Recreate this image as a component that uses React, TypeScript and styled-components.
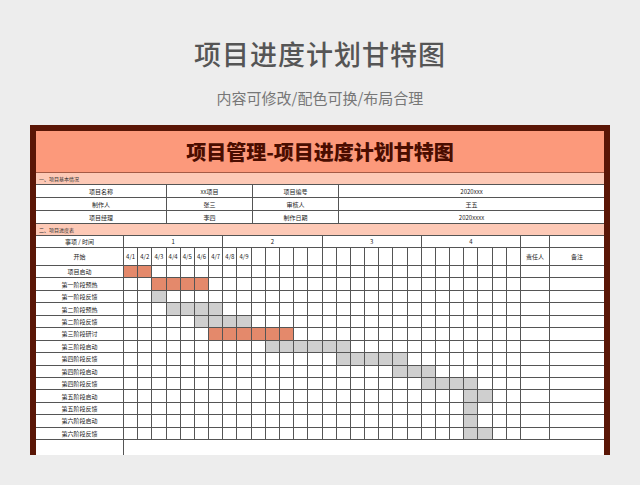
import React from "react";
import styled, { createGlobalStyle } from "styled-components";

const G = createGlobalStyle`
  html,body{margin:0;padding:0;background:#ededed;overflow:hidden;}
  body{font-family:"Noto Sans CJK SC","Noto Sans",sans-serif;}
`;
const Page = styled.div`width:640px;height:455px;overflow:hidden;display:flex;flex-direction:column;align-items:center;background:#ededed;`;
const Title = styled.h1`margin:36px 0 0;font-size:27px;font-weight:500;color:#555;line-height:36px;letter-spacing:1px;`;
const Sub = styled.div`margin-top:15px;font-size:15px;color:#777;line-height:22px;`;
const Frame = styled.div`margin-top:16px;width:568px;border:6px solid #5a1606;border-bottom:none;background:#fff;flex:1;`;
const Head = styled.div`height:41px;background:#fc997b;display:flex;align-items:center;justify-content:center;font-size:20px;font-weight:900;color:#4a0d00;border-bottom:1px solid #a45a45;`;
const Section = styled.div`height:11px;background:#fdc9b6;font-size:5px;color:#333;display:flex;align-items:center;padding-left:3px;border-bottom:1px solid #555;`;
const Info = styled.div`display:grid;grid-template-columns:130px 85px 85px 1fr;gap:1px;background:#555;border-bottom:1px solid #555;`;
const ICell = styled.div`background:#fff;height:12px;font-size:6px;color:#222;display:flex;align-items:center;justify-content:center;`;
const Gantt = styled.div`display:grid;grid-template-columns:87px repeat(28,1fr) 28px 54px;grid-template-rows:11px 17px repeat(14,11.45px) 40px;gap:1px;background:#555;`;
const Cell = styled.div<{ $fill?: string }>`background:${p => p.$fill || "#fff"};font-size:6px;color:#222;display:flex;align-items:center;justify-content:center;white-space:nowrap;overflow:hidden;`;

const tasks: [string, number, number, string][] = [
  ["项目启动", 0, 2, "s"], ["第一阶段预热", 2, 6, "s"], ["第一阶段反馈", 2, 3, "g"],
  ["第二阶段预热", 3, 7, "g"], ["第二阶段反馈", 5, 9, "g"], ["第三阶段研讨", 6, 12, "s"],
  ["第三阶段启动", 10, 16, "g"], ["第四阶段反馈", 15, 20, "g"], ["第四阶段启动", 19, 22, "g"],
  ["第四阶段反馈", 21, 25, "g"], ["第五阶段启动", 24, 26, "g"], ["第五阶段反馈", 24, 25, "g"],
  ["第六阶段启动", 24, 25, "g"], ["第六阶段反馈", 24, 26, "g"],
];
const days = ["4/1","4/2","4/3","4/4","4/5","4/6","4/7","4/8","4/9"];

export default function App() {
  return (
    <Page>
      <G />
      <Title>项目进度计划甘特图</Title>
      <Sub>内容可修改/配色可换/布局合理</Sub>
      <Frame>
        <Head>项目管理-项目进度计划甘特图</Head>
        <Section>一、项目基本情况</Section>
        <Info>
          <ICell>项目名称</ICell><ICell>xx项目</ICell><ICell>项目编号</ICell><ICell>2020xxx</ICell>
          <ICell>制作人</ICell><ICell>张三</ICell><ICell>审核人</ICell><ICell>王五</ICell>
          <ICell>项目经理</ICell><ICell>李四</ICell><ICell>制作日期</ICell><ICell>2020xxxx</ICell>
        </Info>
        <Section>二、项目进度表</Section>
        <Gantt>
          <Cell>事项 / 时间</Cell>
          {[1, 2, 3, 4].map(w => <Cell key={w} style={{ gridColumn: "span 7" }}>{w}</Cell>)}
          <Cell /><Cell />
          <Cell>开始</Cell>
          {Array.from({ length: 28 }, (_, i) => <Cell key={i}>{days[i] || ""}</Cell>)}
          <Cell>责任人</Cell><Cell>备注</Cell>
          {tasks.map(([n, a, b, c], r) => (
            <React.Fragment key={r}>
              <Cell>{n}</Cell>
              {Array.from({ length: 28 }, (_, i) => (
                <Cell key={i} $fill={i >= a && i < b ? (c === "s" ? "#e4896b" : "#cfcfcf") : undefined} />
              ))}
              <Cell /><Cell />
            </React.Fragment>
          ))}
          <Cell style={{ alignItems: "flex-end" }}>备注</Cell>
          <Cell style={{ gridColumn: "span 30" }} />
        </Gantt>
      </Frame>
    </Page>
  );
}
